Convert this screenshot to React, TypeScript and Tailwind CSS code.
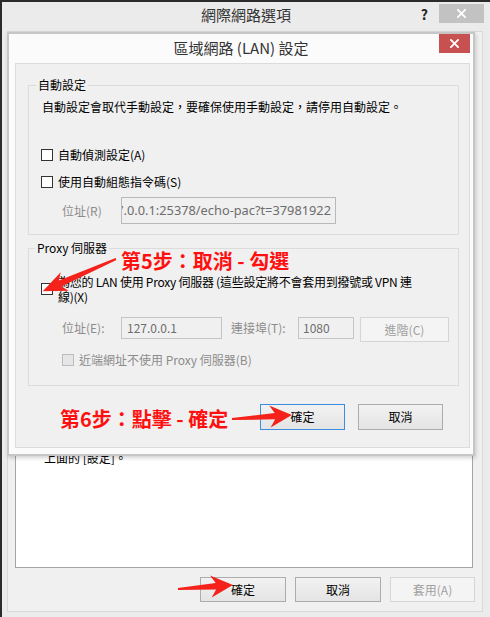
import React from "react";

const FONT = { fontFamily: '"Noto Sans CJK TC", "Noto Sans", sans-serif' };

function XIcon({ size = 9 }: { size?: number }) {
  return (
    <svg width={size} height={size} viewBox="0 0 10 10">
      <path d="M1 1 L9 9 M9 1 L1 9" stroke="#fff" strokeWidth="2" strokeLinecap="square" />
    </svg>
  );
}

function CheckBox({ disabled = false }: { disabled?: boolean }) {
  return (
    <span
      className={
        "block w-[12px] h-[12px] shrink-0 border " +
        (disabled ? "border-[#bcbcbc] bg-[#e6e6e6]" : "border-[#333333] bg-white")
      }
    />
  );
}

function Btn({
  children,
  w,
  h,
  variant = "normal",
}: {
  children: React.ReactNode;
  w: string;
  h: string;
  variant?: "normal" | "focus" | "disabled";
}) {
  const cls =
    variant === "focus"
      ? "border-[#3c8ce0] bg-gradient-to-b from-[#f2f2f2] to-[#e4e4e4] text-black"
      : variant === "disabled"
      ? "border-[#d5d5d5] bg-[#f4f4f4] text-[#a0a0a0]"
      : "border-[#acacac] bg-gradient-to-b from-[#f2f2f2] to-[#e4e4e4] text-black";
  return (
    <div className={`${w} ${h} border flex items-center justify-center text-[12px] ${cls}`}>
      {children}
    </div>
  );
}

function Arrow({
  x,
  y,
  angle,
  len,
  hw = 10,
  hl = 22,
}: {
  x: number;
  y: number;
  angle: number;
  len: number;
  hw?: number;
  hl?: number;
}) {
  const L = len;
  const pts = [
    [0, -1],
    [L - hl + 3, -3.2],
    [L - hl - 2, -hw],
    [L, 0],
    [L - hl - 2, hw],
    [L - hl + 3, 3.2],
    [0, 1],
  ]
    .map((p) => p.join(","))
    .join(" ");
  return (
    <g transform={`translate(${x},${y}) rotate(${angle})`}>
      <polygon points={pts} fill="#f5211b" />
    </g>
  );
}

export default function App() {
  return (
    <div
      className="relative w-[490px] h-[617px] overflow-hidden bg-[#2b2b2b] pl-[2px] pt-[2px]"
      style={FONT}
    >
      {/* Outer window */}
      <div className="w-[488px] h-[615px] bg-[#ebebeb] flex flex-col">
        {/* title bar */}
        <div className="h-[29px] shrink-0 grid grid-cols-[1fr_auto_1fr]">
          <div />
          <div className="text-[15px] leading-[24px] text-[#333333] pt-[1px]">網際網路選項</div>
          <div className="flex justify-end items-start pr-[6px] pt-[2px]">
            <span className="text-[14px] leading-[18px] font-bold text-[#222] mr-[11px] mt-[1px]">?</span>
            <div className="w-[45px] h-[19px] bg-[#c2c2c2] flex items-center justify-center">
              <XIcon />
            </div>
          </div>
        </div>
        {/* client */}
        <div className="ml-[5px] w-[476px] h-[581px] border border-[#d9d9d9] bg-[#f0f0f0] flex flex-col">
          <div className="ml-[7px] mt-[29px] w-[458px] h-[507px] bg-white border border-[#a5a5a5] pl-[28px] pt-[388px]">
            <div className="text-[12px] leading-[16px] text-black">上面的 [設定]。</div>
          </div>
          <div className="mt-[9px] flex justify-end pr-[7px] gap-[9px]">
            <Btn w="w-[86px]" h="h-[25px]">確定</Btn>
            <Btn w="w-[86px]" h="h-[25px]">取消</Btn>
            <Btn w="w-[85px]" h="h-[25px]" variant="disabled">套用(A)</Btn>
          </div>
        </div>
      </div>

      {/* Inner dialog (window on top) */}
      <div className="absolute left-[7px] top-[32px] w-[468px] h-[424px] border-2 border-[#c6c6c6] bg-[#fbfbfb] flex flex-col shadow-[1px_2px_4px_rgba(0,0,0,0.18)]">
        <div className="h-[29px] shrink-0 grid grid-cols-[1fr_auto_1fr]">
          <div />
          <div className="text-[15px] leading-[24px] text-[#333333] pt-[2px]">區域網路 (LAN) 設定</div>
          <div className="flex justify-end pr-[3px]">
            <div className="w-[31px] h-[19px] bg-[#c75050] flex items-center justify-center">
              <XIcon />
            </div>
          </div>
        </div>
        <div className="ml-[6px] mr-[3px] h-[385px] border border-[#dcdcdc] bg-[#f0f0f0] flex flex-col text-[12px] text-black">
          {/* Group 1 */}
          <fieldset className="mt-[13px] ml-[12px] w-[431px] border border-[#dcdcdc] pb-[10px]">
            <legend className="ml-[7px] px-[2px] leading-[16px]">自動設定</legend>
            <div className="mt-[6px] ml-[13px] leading-[16px] whitespace-nowrap">
              自動設定會取代手動設定，要確保使用手動設定，請停用自動設定。
            </div>
            <div className="mt-[32px] ml-[12px] h-[16px] flex items-center gap-[5px]">
              <CheckBox />
              <span className="leading-[16px]">自動偵測設定(A)</span>
            </div>
            <div className="mt-[11px] ml-[12px] h-[16px] flex items-center gap-[5px]">
              <CheckBox />
              <span className="leading-[16px]">使用自動組態指令碼(S)</span>
            </div>
            <div className="mt-[7px] pl-[33px] flex items-center">
              <span className="w-[59px] text-[#8c8c8c]">位址(R)</span>
              <div className="w-[215px] h-[27px] border border-[#b9b9b9] bg-[#f0f0f0] overflow-hidden flex items-center justify-end pr-[4px]">
                <span
                  className="whitespace-nowrap text-[#6d6d6d] shrink-0 text-[12.8px]"
                  style={{ fontFamily: '"Noto Sans", sans-serif' }}
                >
                  127.0.0.1:25378/echo-pac?t=37981922
                </span>
              </div>
            </div>
          </fieldset>

          {/* Group 2 */}
          <fieldset className="mt-[5px] ml-[12px] w-[431px] border border-[#dcdcdc] pb-[17px]">
            <legend className="ml-[6px] px-[2px] leading-[16px]">Proxy 伺服器</legend>
            <div className="mt-[18px] ml-[12px] flex items-center gap-[5px]">
              <CheckBox />
              <span className="leading-[15px] whitespace-nowrap tracking-[-0.25px]">
                為您的 LAN 使用 Proxy 伺服器 (這些設定將不會套用到撥號或 VPN 連
                <br />
                線)(X)
              </span>
            </div>
            <div className="mt-[13px] pl-[33px] flex items-start">
              <span className="w-[59px] h-[22px] leading-[22px] text-[#8c8c8c]">位址(E):</span>
              <div className="w-[101px] h-[22px] border border-[#c5c5c5] bg-[#f0f0f0] pl-[5px] leading-[20px] text-[#6d6d6d]">
                127.0.0.1
              </div>
              <span className="ml-[9px] w-[67px] h-[22px] leading-[22px] text-[#8c8c8c]">連接埠(T):</span>
              <div className="w-[56px] h-[22px] border border-[#c5c5c5] bg-[#f0f0f0] pl-[4px] leading-[20px] text-[#6d6d6d]">
                1080
              </div>
              <div className="ml-[6px]">
                <Btn w="w-[89px]" h="h-[25px]" variant="disabled">進階(C)</Btn>
              </div>
            </div>
            <div className="mt-[10px] ml-[33px] h-[16px] flex items-center gap-[5px]">
              <CheckBox disabled />
              <span className="leading-[16px] text-[#8c8c8c]">近端網址不使用 Proxy 伺服器(B)</span>
            </div>
          </fieldset>

          <div className="mt-[18px] flex justify-end gap-[13px] pr-[26px]">
            <Btn w="w-[85px]" h="h-[26px]" variant="focus">確定</Btn>
            <Btn w="w-[85px]" h="h-[26px]">取消</Btn>
          </div>
        </div>
      </div>

      {/* annotations */}
      <div className="absolute left-[121px] top-[250px] text-[20px] leading-[22px] font-bold text-[#ff1010] whitespace-nowrap">
        第5步：取消 - 勾選
      </div>
      <div className="absolute left-[60px] top-[408px] text-[20px] leading-[22px] font-bold text-[#ff1010] whitespace-nowrap">
        第6步：點擊 - 確定
      </div>
      <svg className="absolute left-0 top-0 pointer-events-none" width="490" height="617">
        <Arrow x={116} y={259} angle={156.3} len={80} hw={10} hl={22} />
        <Arrow x={232} y={419} angle={-3.8} len={60} hw={11} hl={20} />
        <Arrow x={178} y={589} angle={-4.2} len={55} hw={11} hl={20} />
      </svg>
    </div>
  );
}
